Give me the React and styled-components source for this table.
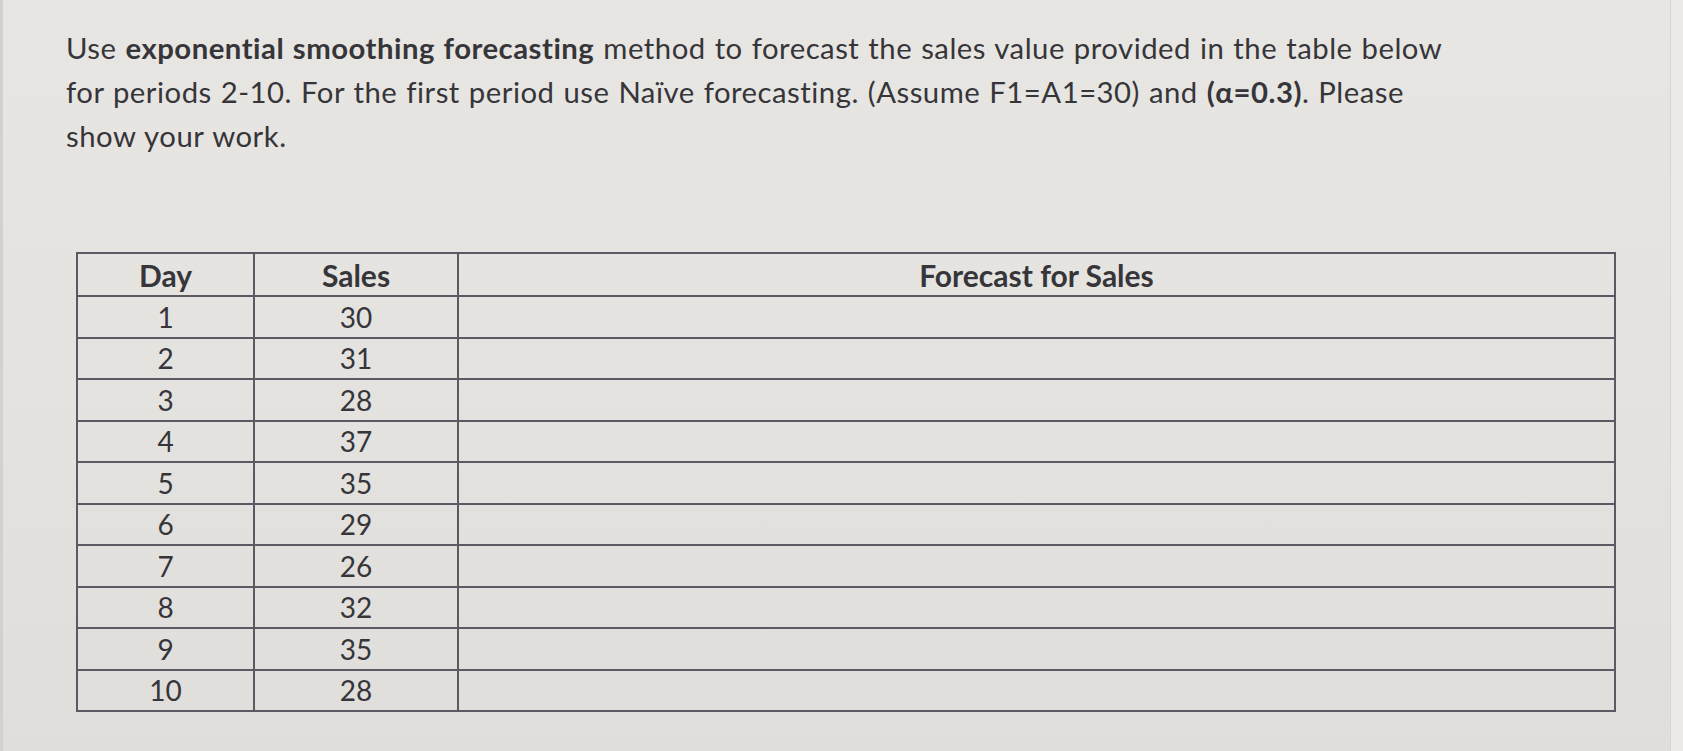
import React from "react";
import styled, { createGlobalStyle } from "styled-components";

const rows = [
  [1, 30],
  [2, 31],
  [3, 28],
  [4, 37],
  [5, 35],
  [6, 29],
  [7, 26],
  [8, 32],
  [9, 35],
  [10, 28],
];

const App = () => {
  return (
    <Page>
      <GlobalStyle />
      <Sheet>
        <Question>
          <Line>
            Use <b>exponential smoothing forecasting</b> method to forecast the
            sales value provided in the table below
          </Line>
          <Line>
            for periods 2-10. For the first period use Naïve forecasting.
            (Assume F1=A1=30) and <b>(α=0.3)</b>. Please
          </Line>
          <Line>show your work.</Line>
        </Question>
        <Table>
          <thead>
            <tr>
              <HeadCell width="175px">Day</HeadCell>
              <HeadCell width="202px">Sales</HeadCell>
              <HeadCell>Forecast for Sales</HeadCell>
            </tr>
          </thead>
          <tbody>
            {rows.map(([day, sales]) => (
              <tr key={day}>
                <Cell>{day}</Cell>
                <Cell>{sales}</Cell>
                <Cell />
              </tr>
            ))}
          </tbody>
        </Table>
      </Sheet>
      <Bezel />
    </Page>
  );
};

export default App;

// Styled here

const GlobalStyle = createGlobalStyle`
  html, body {
    margin: 0;
    padding: 0;
    background: #e2e1de;
  }
`;

const Page = styled.div`
  width: 1683px;
  height: 751px;
  display: flex;
  overflow: hidden;
  background: linear-gradient(180deg, #e7e6e3 0%, #e3e2df 60%, #dfdedb 100%);
  font-family: Lato, "Open Sans", sans-serif;
  color: #363539;
`;

const Sheet = styled.div`
  flex: 1;
  padding: 26px 0 0 63px;
  border-left: 3px solid #d2d1ce;
`;

const Bezel = styled.div`
  width: 12px;
  background: #ebeae7;
  border-left: 1px solid #d6d5d2;
`;

const Question = styled.div`
  font-size: 29.3px;
  line-height: 44px;
  letter-spacing: 0.5px;
  word-spacing: 1px;

  b {
    font-weight: 700;
  }
`;

const Line = styled.div`
  white-space: nowrap;
`;

const Table = styled.table`
  margin: 94px 0 0 10px;
  width: 1540px;
  border-collapse: collapse;
  border: 2px solid #5e5863;
  table-layout: fixed;
`;

const HeadCell = styled.th`
  width: ${(props) => props.width || "auto"};
  height: 41px;
  border: 2px solid #5e5863;
  font-size: 30px;
  font-weight: 700;
  text-align: center;
  padding: 0;
`;

const Cell = styled.td`
  height: 39.5px;
  border: 2px solid #5e5863;
  font-size: 28px;
  text-align: center;
  padding: 0;
`;
